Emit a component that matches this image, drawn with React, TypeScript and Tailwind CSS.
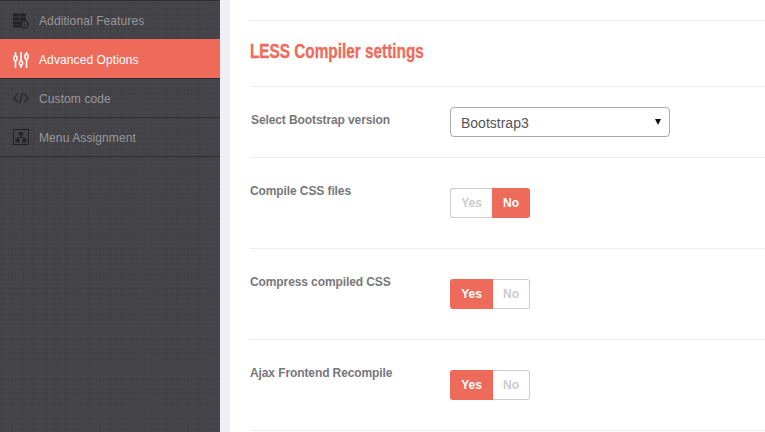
import React from "react";

const arial = "font-['Liberation_Sans',Arial,sans-serif]";

const AdditionalIcon = () => (
  <svg className="mt-0.5" width="16" height="16" viewBox="0 0 16 16" fill="#232326">
    <rect x="0" y="0.5" width="13" height="3" />
    <rect x="0" y="4.5" width="13" height="3" />
    <rect x="0" y="8.5" width="9" height="3" />
    <rect x="0" y="12" width="9" height="2.5" />
    <rect x="6" y="1.5" width="1" height="1" fill="#55555a" />
    <rect x="6" y="5.5" width="1" height="1" fill="#55555a" />
    <circle cx="11.5" cy="11.5" r="3.6" fill="none" stroke="#232326" strokeWidth="1.4" />
    <circle cx="11.5" cy="11.5" r="1" />
  </svg>
);

const SlidersIcon = () => (
  <svg className="mt-0.5" width="16" height="16" viewBox="0 0 16 16" fill="none" stroke="#fff" strokeWidth="1.6">
    <path d="M2.5 0v4M2.5 9v7M8 0v9M8 13v3M13.5 0v2M13.5 7v9" />
    <rect x="1" y="4" width="3" height="4.5" rx="1" />
    <rect x="6.5" y="9" width="3" height="4" rx="1" />
    <rect x="12" y="2.5" width="3" height="4.5" rx="1" />
  </svg>
);

const CodeIcon = () => (
  <svg width="16" height="12" viewBox="0 0 16 12" fill="none" stroke="#2a2a2d" strokeWidth="1.5">
    <path d="M4.5 2 1 6l3.5 4M11.5 2 15 6l-3.5 4" />
    <path d="M9.5 0.5 6.5 11.5" />
  </svg>
);

const MenuIcon = () => (
  <svg width="16" height="16" viewBox="0 0 16 16" fill="none">
    <rect x="0.5" y="0.5" width="15" height="15" stroke="#232326" />
    <rect x="6" y="3" width="4" height="3.5" fill="#232326" />
    <rect x="2.5" y="10" width="4" height="3.5" fill="#232326" />
    <rect x="9.5" y="10" width="4" height="3.5" fill="#232326" />
    <path d="M8 6.5v2M4.5 10V8.5h7V10" stroke="#232326" />
  </svg>
);

const menu = [
  { label: "Additional Features", icon: <AdditionalIcon />, row: "h-[38px]" },
  { label: "Advanced Options", icon: <SlidersIcon />, row: "h-10 border-b border-[#2f2f32]", active: true },
  { label: "Custom code", icon: <CodeIcon />, row: "h-[39px] border-b border-[#2f2f32]" },
  { label: "Menu Assignment", icon: <MenuIcon />, row: "h-[39px] border-b border-[#2f2f32]" },
];

const Toggle = ({ on }: { on: boolean }) => (
  <div className={`flex h-[30px] w-20 text-xs font-bold ${arial}`}>
    <div
      className={
        on
          ? "flex w-[43px] items-center justify-center rounded-l-[3px] bg-[#ee6a5b] text-white"
          : "flex w-[42px] items-center justify-center rounded-l-[3px] border border-r-0 border-[#cccccc] bg-white text-[#cccccc]"
      }
    >
      Yes
    </div>
    <div
      className={
        on
          ? "flex flex-1 items-center justify-center rounded-r-[3px] border border-l-0 border-[#cccccc] bg-white text-[#cccccc]"
          : "flex flex-1 items-center justify-center rounded-r-[3px] bg-[#ee6a5b] text-white"
      }
    >
      No
    </div>
  </div>
);

const ToggleRow = ({ label, on }: { label: string; on: boolean }) => (
  <div className="flex h-[91px] border-b border-[#eeeeee] pt-[25px]">
    <div className={`w-[200px] text-xs leading-[16px] font-bold tracking-[-0.1px] text-[#77777a] ${arial}`}>{label}</div>
    <div className="pt-[5px]">
      <Toggle on={on} />
    </div>
  </div>
);

export default function App() {
  return (
    <div className="flex h-[432px] w-[765px] overflow-hidden bg-white">
      {/* Sidebar */}
      <div className="h-full w-[220px] shrink-0 bg-[#444448] bg-[repeating-linear-gradient(90deg,rgba(255,255,255,0.012)_0px,rgba(255,255,255,0.012)_1px,transparent_1px,transparent_7px),repeating-linear-gradient(90deg,rgba(0,0,0,0.025)_0px,rgba(0,0,0,0.025)_2px,transparent_2px,transparent_11px),repeating-linear-gradient(0deg,rgba(255,255,255,0.01)_0px,rgba(255,255,255,0.01)_1px,transparent_1px,transparent_5px),repeating-linear-gradient(0deg,rgba(0,0,0,0.025)_0px,rgba(0,0,0,0.025)_1px,transparent_1px,transparent_13px)]">
        <div className="h-px bg-[#2f2f32]" />
        {menu.map((item) => (
          <div
            key={item.label}
            className={`flex items-center pl-[13px] ${item.row} ${item.active ? "bg-[#ee6a5b] text-white" : "text-[#98989b]"}`}
          >
            <div className="flex w-[26px] items-center">{item.icon}</div>
            <span className={`pt-0.5 text-xs tracking-[0.1px] ${arial}`}>{item.label}</span>
          </div>
        ))}
      </div>

      {/* Gutter */}
      <div className="h-full w-2.5 shrink-0 bg-[#eef0f6]" />

      {/* Settings */}
      <div className="flex-1 pt-5 pl-5">
        <div className="h-[67px] border-t border-b border-[#eeeeee] pt-[19px]">
          <h2 className="origin-left scale-x-[0.73] font-['Liberation_Sans',sans-serif] text-[21px] leading-[22px] font-bold whitespace-nowrap text-[#ee6a5b] [-webkit-text-stroke:0.3px_#ee6a5b]">
            LESS Compiler settings
          </h2>
        </div>

        <div className="flex h-[71px] border-b border-[#eeeeee] pt-[25px]">
          <div className={`w-[200px] pl-px text-xs leading-[16px] font-bold tracking-[-0.1px] text-[#77777a] ${arial}`}>
            Select Bootstrap version
          </div>
          <div className="relative -mt-[5px] h-[30px] w-[220px]">
            <select
              defaultValue="Bootstrap3"
              className={`h-full w-full appearance-none rounded-[4px] border border-[#aaaaaa] bg-white pt-0.5 pl-2.5 text-sm text-[#555555] ${arial}`}
            >
              <option>Bootstrap3</option>
              <option>Bootstrap2</option>
            </select>
            <svg className="absolute top-[12px] right-[9px]" width="6" height="6" viewBox="0 0 6 6" fill="#111111">
              <path d="M0 0h6L3 6z" />
            </svg>
          </div>
        </div>

        <ToggleRow label="Compile CSS files" on={false} />
        <ToggleRow label="Compress compiled CSS" on={true} />
        <ToggleRow label="Ajax Frontend Recompile" on={true} />
      </div>
    </div>
  );
}
